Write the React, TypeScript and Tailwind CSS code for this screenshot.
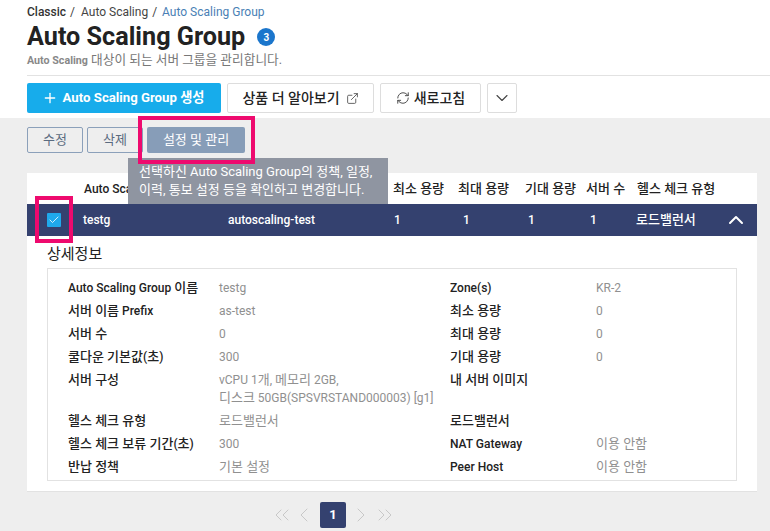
import { ChevronDown, ChevronUp, ChevronLeft, ChevronRight, ChevronsLeft, ChevronsRight, Check, ExternalLink, Plus, RefreshCw } from 'lucide-react'

const font = "font-['Roboto','Noto_Sans_CJK_KR',sans-serif]"

// hangul runs are a touch larger than the latin text around them
function Mixed({ text, className = 'text-[13px]' }: { text: string; className?: string }) {
  return (
    <>
      {text.split(/([가-힣]+(?: [가-힣]+)*)/).map((part, i) =>
        /[가-힣]/.test(part) ? (
          <span key={i} className={className}>
            {part}
          </span>
        ) : (
          part
        ),
      )}
    </>
  )
}

const detailRows = [
  ['Auto Scaling Group 이름', 'testg', 'Zone(s)', 'KR-2'],
  ['서버 이름 Prefix', 'as-test', '최소 용량', '0'],
  ['서버 수', '0', '최대 용량', '0'],
  ['쿨다운 기본값(초)', '300', '기대 용량', '0'],
  ['서버 구성', 'vCPU 1개, 메모리 2GB,\n디스크 50GB(SPSVRSTAND000003) [g1]', '내 서버 이미지', ''],
  ['헬스 체크 유형', '로드밸런서', '로드밸런서', ''],
  ['헬스 체크 보류 기간(초)', '300', 'NAT Gateway', '이용 안함'],
  ['반납 정책', '기본 설정', 'Peer Host', '이용 안함'],
]

function Label({ text }: { text: string }) {
  return (
    <dt className="text-[12px] leading-[18px] font-medium text-[#222] whitespace-nowrap">
      <Mixed text={text} />
    </dt>
  )
}

function Value({ text }: { text: string }) {
  return (
    <dd className="text-[12px] leading-[18px] text-[#909090] whitespace-pre">
      <Mixed text={text} />
    </dd>
  )
}

export default function App() {
  return (
    <div className={`${font} relative w-[770px] h-[531px] overflow-hidden bg-[#eeeeee]`}>
      <header className="h-[118px] bg-white pl-[27px]">
        <nav className="flex pt-[4px] text-[12px] leading-[16px] text-[#444]">
          <span className="font-medium text-[#333]">Classic</span>
          <span className="ml-[4px]">/</span>
          <span className="ml-[6px]">Auto Scaling</span>
          <span className="ml-[4px]">/</span>
          <span className="ml-[5px] text-[#4a7fb5]">Auto Scaling Group</span>
        </nav>
        <div className="flex items-center mt-[2px] h-[30px]">
          <h1 className="text-[25.2px] leading-[30px] font-bold text-[#222]">Auto Scaling Group</h1>
          <span className="ml-[12px] flex items-center justify-center w-[18px] h-[18px] rounded-full bg-[#1b76cc] text-[10px] font-bold text-white">3</span>
        </div>
        <p className="text-[12.7px] leading-[16px] text-[#777]">
          <span className="text-[10.7px] font-bold text-[#888]">Auto Scaling</span> 대상이 되는 서버 그룹을 관리합니다.
        </p>
        <div className="mt-[6px] border-t border-[#e2e2e2] pt-[7px] flex gap-[6px]">
          <button className="w-[194px] h-[30px] pr-[2px] rounded-[2px] bg-[#17aceb] flex items-center justify-center text-[13.2px] font-bold text-white">
            <Plus size={16} strokeWidth={2} className="mr-[5px]" />
            Auto Scaling Group 생성
          </button>
          <button className="w-[147px] h-[30px] rounded-[2px] border border-[#dddddd] bg-white flex items-center justify-center text-[14px] font-medium text-[#222]">
            상품 더 알아보기
            <ExternalLink size={13} strokeWidth={1.5} className="ml-[6px] text-[#444]" />
          </button>
          <button className="w-[101px] h-[30px] rounded-[2px] border border-[#dddddd] bg-white flex items-center justify-center text-[14px] font-medium text-[#222]">
            <RefreshCw size={14} strokeWidth={1.6} className="mr-[4px] text-[#444]" />
            새로고침
          </button>
          <button className="w-[30px] h-[30px] rounded-[2px] border border-[#dddddd] bg-white flex items-center justify-center text-[#444]">
            <ChevronDown size={20} strokeWidth={1.3} />
          </button>
        </div>
      </header>

      <main className="pl-[27px] pr-[13px]">
        <div className="flex gap-[4px] pt-[9px]">
          <button className="w-[56px] h-[26px] rounded-[2px] border border-[#8ba0ba] text-[13px] text-[#5a6b80]">수정</button>
          <button className="w-[56px] h-[26px] rounded-[2px] border border-[#8ba0ba] text-[13px] text-[#5a6b80]">삭제</button>
          <button className="w-[98px] h-[26px] rounded-[2px] bg-[#879db8] text-[13px] text-white">설정 및 관리</button>
        </div>

        <section className="mt-[20px] h-[319px] bg-white border-b border-[#e2e2e2]">
          <div className="flex h-[31px] items-center text-[13px] font-medium text-[#222]">
            <span className="w-[366px] pl-[57px] text-[12px]">
              <Mixed text="Auto Scaling Group 이름" />
            </span>
            <span className="w-[65px]">최소 용량</span>
            <span className="w-[67px]">최대 용량</span>
            <span className="w-[61px]">기대 용량</span>
            <span className="w-[51px]">서버 수</span>
            <span>헬스 체크 유형</span>
          </div>
          <div className="flex h-[32px] items-center bg-[#34416f] text-[12px] font-medium text-white">
            <span className="w-[56px] pl-[20px]">
              <span className="flex items-center justify-center w-[14px] h-[14px] rounded-[1px] bg-[#1fa9ec]">
                <Check size={12} strokeWidth={1.6} className="text-white" />
              </span>
            </span>
            <span className="w-[145px]">testg</span>
            <span className="w-[165px]">autoscaling-test</span>
            <span className="w-[69px] pl-[1px]">1</span>
            <span className="w-[65px] pl-[1px]">1</span>
            <span className="w-[62px] pl-[1px]">1</span>
            <span className="w-[47px] pl-[1px]">1</span>
            <span className="w-[88px] text-[13px]">로드밸런서</span>
            <ChevronUp size={24} strokeWidth={2} />
          </div>
          <h2 className="ml-[20px] mt-[8px] text-[15px] leading-[20px] text-[#222]">상세정보</h2>
          <div className="mx-[20px] mt-[4px] h-[213px] bg-white border border-[#e2e2e2] pl-[20px] pt-[10px]">
            <dl className="grid grid-cols-[151px_231px_146px_1fr] gap-y-[5px]">
              {detailRows.map(([l1, v1, l2, v2]) => (
                <div key={l1} className="contents">
                  <Label text={l1} />
                  <Value text={v1} />
                  <Label text={l2} />
                  <Value text={v2} />
                </div>
              ))}
            </dl>
          </div>
        </section>

        <nav className="flex items-center ml-[243px] mt-[10px] text-[#c8c8c8]">
          <ChevronsLeft size={24} strokeWidth={1} />
          <ChevronLeft size={24} strokeWidth={1} className="-ml-[2px]" />
          <span className="ml-[4px] flex items-center justify-center w-[26px] h-[26px] rounded-[2px] bg-[#34416f] text-[13px] font-bold text-white">1</span>
          <ChevronRight size={24} strokeWidth={1} className="ml-[3px]" />
          <ChevronsRight size={24} strokeWidth={1} />
        </nav>
      </main>

      {/* tooltip and the pink annotation boxes sit over the page */}
      <div className="absolute left-[128px] top-[158px] w-[260px] h-[46px] bg-[#8f95a1] px-[11px] pt-[5px] text-[13px] leading-[18px] text-white whitespace-nowrap">
        선택하신 Auto Scaling Group의 정책, 일정,
        <br />
        이력, 통보 설정 등을 확인하고 변경합니다.
      </div>
      <div className="absolute left-[138px] top-[116px] w-[117px] h-[48px] border-[4px] border-[#ee0a6e]" />
      <div className="absolute left-[35px] top-[196px] w-[38px] h-[47px] border-[4px] border-[#ee0a6e]" />
    </div>
  )
}
